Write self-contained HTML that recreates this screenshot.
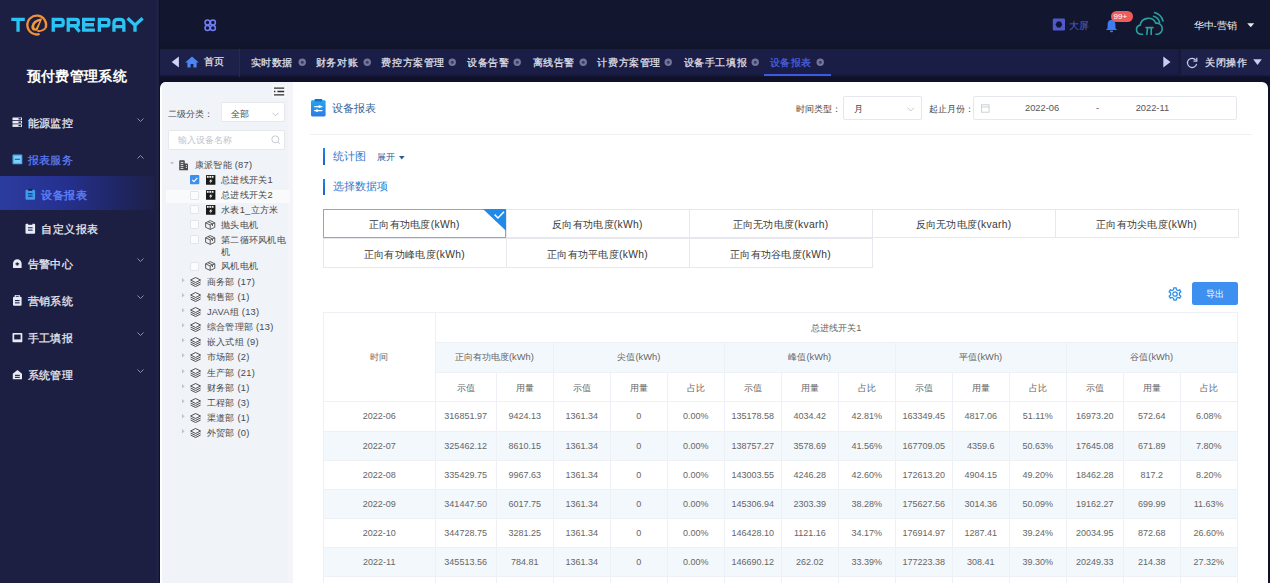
<!DOCTYPE html>
<html><head><meta charset="utf-8">
<style>
*{box-sizing:border-box;margin:0;padding:0}
html,body{width:1270px;height:583px;overflow:hidden;background:#0f1129;font-family:"Liberation Sans",sans-serif}
.a{position:absolute}
.t{position:absolute;white-space:nowrap;line-height:1}
#side{left:0;top:0;width:158.5px;height:583px;background:#1d1f42}
#sidestrip{left:152.8px;top:0;width:5.7px;height:583px;background:linear-gradient(90deg,#1c1d4a 0%,#1c1d4a 55%,#22223f 56%,#22223f 100%)}
#hdr{left:160px;top:0;width:1110px;height:48.5px;background:linear-gradient(#13162f,#121630 80%,#10152a)}
#tabs{left:160px;top:48.5px;width:1110px;height:28.8px;background:linear-gradient(#1a1d45 0%,#1a1d45 88%,#121430 100%)}
#panel{left:160px;top:81.7px;width:1107.6px;height:520px;background:#fff;border-radius:6px 6px 0 0;overflow:hidden}
#inner{left:0;top:-0.7px;width:1107.6px;height:520px}
#tree{left:2px;top:0;width:126px;height:520px;background:#f0f3f8}
#tree2{left:128px;top:0;width:4.8px;height:520px;background:#f5f4f9}
.mi{color:#e6e8f2;font-size:11px;letter-spacing:0.45px;-webkit-text-stroke:0.25px currentColor}
.tb{color:#e4e6f0;font-size:11px;-webkit-text-stroke:0.2px currentColor}
.cl{width:7px;height:7px;border-radius:50%;background:#6b6f8c}
.tr{color:#555;font-size:9.5px}
.cb{width:9px;height:9px;border:1px solid #dcdfe6;background:#fff;border-radius:1px}
.cell{border:1px solid #e4e7ed;font-size:10.5px;color:#333;display:flex;align-items:center;justify-content:center}
table{border-collapse:collapse;table-layout:fixed}
td{border:1px solid #ebeef5;text-align:center;font-size:9.2px;color:#555;padding:0;white-space:nowrap}
</style></head><body>
<div id="side" class="a"></div>
<div id="sidestrip" class="a"></div>
<!--SIDE-->
<svg class="a" style="left:0;top:0" width="155" height="45" viewBox="0 0 155 45">
 <g fill="none" stroke="#2ac3f3" stroke-width="3.3" stroke-linejoin="miter">
  <path d="M11.3 19.45H24.8M18.05 17.7V31.8"/>
  <path d="M53.25 31.8V19.45H61.2Q63.15 19.45 63.15 21.4V23.8Q63.15 25.75 61.2 25.75H53.25"/>
  <path d="M68.25 31.8V19.45H76.2Q78.3 19.45 78.3 21.4V23.8Q78.3 25.75 76.2 25.75H68.25M74.5 25.75L79.6 31.8"/>
  <path d="M94.9 19.45H83.65V30.05H94.9M83.65 24.75H94"/>
  <path d="M99.35 31.8V19.45H107Q108.85 19.45 108.85 21.4V23.8Q108.85 25.75 107 25.75H99.35"/>
  <path d="M113.95 31.8V23.2Q113.95 19.45 117.7 19.45H120.1Q123.85 19.45 123.85 23.2V31.8M113.95 26.6H123.85"/>
  <path d="M127.6 18.2L135 25.2L142.6 18.2M135 25.2V31.8"/>
 </g>
 <g fill="none" stroke="#f0923a" stroke-width="2.3"><path d="M45.6 28.2A9.4 9.4 0 1 0 39.6 34"/></g><path d="M42.3 18.2L37.4 30.6Q31.2 31.6 31.3 26.6Q31.8 19.6 42.3 18.2ZM39.6 21.2Q34.6 22.4 34.2 26.4Q34.2 28.6 35.8 28.4Z" fill="#f39a38" fill-rule="evenodd"/><path d="M37.4 30.6Q41 32.2 45.6 28.2" fill="none" stroke="#f0923a" stroke-width="1.8"/>
</svg>
<div class="t" style="left:26.8px;top:69px;font-size:14.1px;font-weight:bold;color:#fff;letter-spacing:0.3px">预付费管理系统</div>
<div class="a" style="left:0;top:176.0px;width:155px;height:34px;background:linear-gradient(90deg,#2c3b9e 0%,#253190 40%,#1f2560 80%,#1d2047 100%)"></div>
<svg class="a" style="left:11.5px;top:117.3px" width="11" height="11" viewBox="0 0 11 11"><rect x="0.5" y="0.5" width="9.5" height="2.6" fill="#e9ebf3"/><rect x="0.5" y="3.9" width="9.5" height="2.6" fill="#e9ebf3"/><rect x="0.5" y="7.3" width="9.5" height="2.6" fill="#e9ebf3"/><rect x="6.5" y="1.1" width="2.5" height="1.4" fill="#1d1f42"/><rect x="6.5" y="4.5" width="2.5" height="1.4" fill="#1d1f42"/><rect x="6.5" y="7.9" width="2.5" height="1.4" fill="#1d1f42"/></svg><div class="t mi" style="left:27.5px;top:118.25px;color:#e9ebf3;font-weight:normal">能源监控</div>
<svg class="a" style="left:136.5px;top:116.5px" width="7" height="6"><path d="M0.5 1.5L3.5 4.5L6.5 1.5" fill="none" stroke="#8a8fb0" stroke-width="1"/></svg>
<svg class="a" style="left:11.5px;top:154.3px" width="11" height="11" viewBox="0 0 11 11"><rect x="0.5" y="0.5" width="9.8" height="9.8" rx="1" fill="#49b0f5"/><rect x="2" y="2" width="6.8" height="6.8" fill="#7fd0fa"/><rect x="2.8" y="4.7" width="5.2" height="1.2" fill="#2a5fb0"/></svg><div class="t mi" style="left:27.5px;top:155.25px;color:#5a7df5;font-weight:normal">报表服务</div>
<svg class="a" style="left:136.5px;top:153.5px" width="7" height="6"><path d="M0.5 4.5L3.5 1.5L6.5 4.5" fill="none" stroke="#8a8fb0" stroke-width="1"/></svg>
<svg class="a" style="left:24.8px;top:189.3px" width="11" height="11" viewBox="0 0 11 11"><rect x="0.5" y="0.8" width="9.6" height="10" rx="1" fill="#3d9cf0"/><rect x="3.2" y="0" width="4.2" height="1.8" fill="#1d1f42"/><rect x="3" y="4.2" width="4.6" height="1.1" fill="#1d2b70"/><rect x="3" y="6.6" width="4.6" height="1.1" fill="#1d2b70"/></svg><div class="t mi" style="left:41.3px;top:190.25px;color:#5a7df5;font-weight:normal;-webkit-text-stroke:0.45px currentColor">设备报表</div>
<svg class="a" style="left:24.8px;top:223.3px" width="11" height="11" viewBox="0 0 11 11"><rect x="0.5" y="0.8" width="9.6" height="10" rx="1" fill="#e9ebf3"/><rect x="3.2" y="0" width="4.2" height="1.8" fill="#1d1f42"/><rect x="3" y="4.2" width="4.6" height="1.1" fill="#1d2b70"/><rect x="3" y="6.6" width="4.6" height="1.1" fill="#1d2b70"/></svg><div class="t mi" style="left:41.3px;top:224.25px;color:#e9ebf3;font-weight:normal">自定义报表</div>
<svg class="a" style="left:11.5px;top:257.6px" width="11" height="11" viewBox="0 0 11 11"><path d="M1 10V5.5A4.3 4.3 0 0 1 9.6 5.5V10Z" fill="#e9ebf3"/><rect x="4.5" y="4.5" width="1.6" height="3" fill="#1d1f42"/><rect x="3.5" y="5.2" width="3.6" height="1.3" fill="#1d1f42"/></svg><div class="t mi" style="left:27.5px;top:258.55px;color:#e9ebf3;font-weight:normal">告警中心</div>
<svg class="a" style="left:136.5px;top:256.8px" width="7" height="6"><path d="M0.5 1.5L3.5 4.5L6.5 1.5" fill="none" stroke="#8a8fb0" stroke-width="1"/></svg>
<svg class="a" style="left:11.5px;top:294.7px" width="11" height="11" viewBox="0 0 11 11"><rect x="1" y="1.8" width="8.6" height="9" rx="1" fill="#e9ebf3"/><rect x="3.3" y="0.3" width="4" height="2.2" fill="none" stroke="#e9ebf3" stroke-width="1"/><rect x="3" y="5" width="4.6" height="1.1" fill="#1d1f42"/><rect x="3" y="7.3" width="4.6" height="1.1" fill="#1d1f42"/></svg><div class="t mi" style="left:27.5px;top:295.65px;color:#e9ebf3;font-weight:normal">营销系统</div>
<svg class="a" style="left:136.5px;top:293.9px" width="7" height="6"><path d="M0.5 1.5L3.5 4.5L6.5 1.5" fill="none" stroke="#8a8fb0" stroke-width="1"/></svg>
<svg class="a" style="left:11.5px;top:331.7px" width="11" height="11" viewBox="0 0 11 11"><rect x="0.5" y="1" width="9.8" height="9.2" rx="0.8" fill="#e9ebf3"/><rect x="2.2" y="2.6" width="6.4" height="4.8" fill="#1d1f42"/></svg><div class="t mi" style="left:27.5px;top:332.65px;color:#e9ebf3;font-weight:normal">手工填报</div>
<svg class="a" style="left:136.5px;top:330.9px" width="7" height="6"><path d="M0.5 1.5L3.5 4.5L6.5 1.5" fill="none" stroke="#8a8fb0" stroke-width="1"/></svg>
<svg class="a" style="left:11.5px;top:368.8px" width="11" height="11" viewBox="0 0 11 11"><path d="M0.8 10.3V4.8L5.4 1L10 4.8V10.3Z" fill="#e9ebf3"/><rect x="3" y="5.8" width="4.8" height="1.1" fill="#1d1f42"/><rect x="3" y="7.8" width="4.8" height="1.1" fill="#1d1f42"/></svg><div class="t mi" style="left:27.5px;top:369.75px;color:#e9ebf3;font-weight:normal">系统管理</div>
<svg class="a" style="left:136.5px;top:368.0px" width="7" height="6"><path d="M0.5 1.5L3.5 4.5L6.5 1.5" fill="none" stroke="#8a8fb0" stroke-width="1"/></svg>
<!--/SIDE-->
<div id="hdr" class="a"></div>
<div id="tabs" class="a"></div>
<!--HDR-->
<svg class="a" style="left:203.8px;top:18.6px" width="13" height="13" viewBox="0 0 13 13"><g fill="none" stroke="#6f80f5" stroke-width="1.5"><circle cx="3.5" cy="3.5" r="2.5"/><circle cx="8.9" cy="3.5" r="2.5"/><circle cx="3.5" cy="8.9" r="2.5"/><circle cx="8.9" cy="8.9" r="2.5"/></g></svg>
<svg class="a" style="left:1052px;top:17.5px" width="14" height="13" viewBox="0 0 14 13"><rect x="0.8" y="0.5" width="12.2" height="12" rx="1.2" fill="#5059cc"/><path d="M3.5 6.5L5.2 3.6H8.6L10.3 6.5L8.6 9.4H5.2Z" fill="#12142f"/></svg>
<div class="t" style="left:1068.5px;top:21px;font-size:9.5px;color:#4e60d0">大屏</div>
<svg class="a" style="left:1104.5px;top:19px" width="13" height="14" viewBox="0 0 13 14"><path d="M6.5 0.8C3.8 0.8 2.6 3 2.6 5.5V9.2L0.8 11H12.2L10.4 9.2V5.5C10.4 3 9.2 0.8 6.5 0.8Z" fill="#3e7cf2"/><rect x="5" y="11.6" width="3" height="1.6" rx="0.8" fill="#3e7cf2"/></svg>
<div class="a" style="left:1110.5px;top:10.6px;width:22.5px;height:11.8px;border-radius:6px;background:#ee5d5a"></div>
<div class="t" style="left:1113.5px;top:12.5px;font-size:8px;color:#fff">99+</div>
<svg class="a" style="left:1134.5px;top:11px" width="30" height="26" viewBox="0 0 30 26"><g fill="none" stroke="#2aa09e" stroke-width="1.6" stroke-linecap="round"><path d="M7.5 23.2H5.8A4.6 4.6 0 0 1 5.2 14.1A8.2 8.2 0 0 1 20.8 12.2A5.5 5.5 0 0 1 22.6 23.2H21"/><path d="M18.6 5.2A8.6 8.6 0 0 1 24.6 11.2"/><path d="M19.6 1.6A12.2 12.2 0 0 1 28 10"/><path d="M11 16.6H18M12.6 16.6L11.8 23.4M16.2 16.6V23.4"/></g></svg>
<div class="t" style="left:1193.5px;top:21px;font-size:9.6px;color:#f0f1f6;font-weight:normal">华中-营销</div>
<svg class="a" style="left:1247px;top:23px" width="8" height="5"><path d="M0.2 0.3H7.2L3.7 4.3Z" fill="#e8e9f0"/></svg>
<div class="a" style="left:160px;top:48.5px;width:79px;height:26px;background:#1d2049"></div>
<div class="a" style="left:239px;top:48.5px;width:1px;height:28.8px;background:#24285a"></div>
<div class="a" style="left:1178px;top:48.5px;width:92px;height:26px;background:#1d2049"></div>
<div class="a" style="left:1178px;top:48.5px;width:2.5px;height:26px;background:#171a3c"></div>
<svg class="a" style="left:171px;top:55.5px" width="9" height="12"><path d="M7.9 0.5V11.4L0.7 5.95Z" fill="#d0d4f5"/></svg>
<svg class="a" style="left:185px;top:55.5px" width="14" height="12" viewBox="0 0 14 12"><path d="M7 0.4L13.8 6.6H11.6V11.4H8.4V8H5.6V11.4H2.4V6.6H0.2Z" fill="#4d86f2"/></svg>
<div class="t tb" style="left:203.5px;top:57.1px;font-size:10.4px;letter-spacing:0.6px">首页</div>
<svg class="a" style="left:1163px;top:55.5px" width="8" height="12"><path d="M0.3 0.5V11.4L7.5 5.95Z" fill="#c8cdf2"/></svg>
<svg class="a" style="left:1186px;top:56.5px" width="12" height="12" viewBox="0 0 12 12"><path d="M9.8 3.2A4.6 4.6 0 1 0 10.6 6.8" fill="none" stroke="#c8cdf2" stroke-width="1.2"/><path d="M10.8 0.8V4.2H7.4" fill="none" stroke="#c8cdf2" stroke-width="1.2"/></svg>
<div class="t tb" style="left:1205px;top:57.5px;font-size:10.4px;letter-spacing:0.55px">关闭操作</div>
<svg class="a" style="left:1252.5px;top:59px" width="9" height="7"><path d="M0.2 0.3H8.8L4.5 6Z" fill="#c8cdf2"/></svg>
<div class="a" style="left:764px;top:73.6px;width:67px;height:2.2px;background:#3a5ae0"></div>
<div class="t tb" style="left:250.7px;top:57.5px;font-size:10.4px;letter-spacing:0.6px;color:#e4e6f0">实时数据</div>
<svg class="a" style="left:297.5px;top:57.5px" width="9" height="9" viewBox="0 0 9 9"><circle cx="4.25" cy="4.25" r="3.7" fill="#72769a"/><circle cx="4.25" cy="4.25" r="1.5" fill="#3a3d62"/></svg>
<div class="t tb" style="left:315.9px;top:57.5px;font-size:10.4px;letter-spacing:0.6px;color:#e4e6f0">财务对账</div>
<svg class="a" style="left:362.5px;top:57.5px" width="9" height="9" viewBox="0 0 9 9"><circle cx="4.25" cy="4.25" r="3.7" fill="#72769a"/><circle cx="4.25" cy="4.25" r="1.5" fill="#3a3d62"/></svg>
<div class="t tb" style="left:381.4px;top:57.5px;font-size:10.4px;letter-spacing:0.6px;color:#e4e6f0">费控方案管理</div>
<svg class="a" style="left:448px;top:57.5px" width="9" height="9" viewBox="0 0 9 9"><circle cx="4.25" cy="4.25" r="3.7" fill="#72769a"/><circle cx="4.25" cy="4.25" r="1.5" fill="#3a3d62"/></svg>
<div class="t tb" style="left:467.3px;top:57.5px;font-size:10.4px;letter-spacing:0.6px;color:#e4e6f0">设备告警</div>
<svg class="a" style="left:513px;top:57.5px" width="9" height="9" viewBox="0 0 9 9"><circle cx="4.25" cy="4.25" r="3.7" fill="#72769a"/><circle cx="4.25" cy="4.25" r="1.5" fill="#3a3d62"/></svg>
<div class="t tb" style="left:532.5px;top:57.5px;font-size:10.4px;letter-spacing:0.6px;color:#e4e6f0">离线告警</div>
<svg class="a" style="left:579px;top:57.5px" width="9" height="9" viewBox="0 0 9 9"><circle cx="4.25" cy="4.25" r="3.7" fill="#72769a"/><circle cx="4.25" cy="4.25" r="1.5" fill="#3a3d62"/></svg>
<div class="t tb" style="left:597.4px;top:57.5px;font-size:10.4px;letter-spacing:0.6px;color:#e4e6f0">计费方案管理</div>
<svg class="a" style="left:663.5px;top:57.5px" width="9" height="9" viewBox="0 0 9 9"><circle cx="4.25" cy="4.25" r="3.7" fill="#72769a"/><circle cx="4.25" cy="4.25" r="1.5" fill="#3a3d62"/></svg>
<div class="t tb" style="left:683.7px;top:57.5px;font-size:10.4px;letter-spacing:0.6px;color:#e4e6f0">设备手工填报</div>
<svg class="a" style="left:751px;top:57.5px" width="9" height="9" viewBox="0 0 9 9"><circle cx="4.25" cy="4.25" r="3.7" fill="#72769a"/><circle cx="4.25" cy="4.25" r="1.5" fill="#3a3d62"/></svg>
<div class="t tb" style="left:769.5px;top:57.5px;font-size:10.4px;letter-spacing:0.6px;color:#4a63e6">设备报表</div>
<svg class="a" style="left:815.6px;top:57.5px" width="9" height="9" viewBox="0 0 9 9"><circle cx="4.25" cy="4.25" r="3.7" fill="#72769a"/><circle cx="4.25" cy="4.25" r="1.5" fill="#3a3d62"/></svg>
<!--/HDR-->
<div id="panel" class="a">
  <div id="inner" class="a">
<div id="tree" class="a"></div><div id="tree2" class="a"></div>
<!--TREE--><div class="a" style="left:111.5px;top:3.5px;width:15px;height:13px;background:#f6f7fa"></div><svg class="a" style="left:113.5px;top:5.8px" width="11" height="9" viewBox="0 0 11 9"><path d="M0 1.2H10.2M0 4.5H1.4M3.4 4.5H10.2M0 7.8H10.2" stroke="#2e2e2e" stroke-width="1.3"/></svg>
<div class="t tr" style="left:7.7px;top:28.3px;font-size:9.4px;color:#484848">二级分类：</div>
<div class="a" style="left:61px;top:21.4px;width:64px;height:20px;background:#fff;border:1px solid #e6e8ee;border-radius:2px"></div>
<div class="t tr" style="left:70.7px;top:28.3px;font-size:9.4px;color:#484848">全部</div>
<svg class="a" style="left:112.3px;top:30.8px" width="7" height="5"><path d="M0.5 0.8L3.5 3.8L6.5 0.8" fill="none" stroke="#b8bcc6" stroke-width="0.9"/></svg>
<div class="a" style="left:7.7px;top:48.7px;width:117.3px;height:20.7px;background:#fff;border:1px solid #e6e8ee;border-radius:2px"></div>
<div class="t tr" style="left:17.5px;top:54.5px;font-size:9.2px;color:#c0c4cc">输入设备名称</div>
<svg class="a" style="left:110.5px;top:54px" width="10" height="10" viewBox="0 0 10 10"><circle cx="4.3" cy="4.3" r="3.5" fill="none" stroke="#c0c4cc" stroke-width="0.9"/><path d="M6.8 6.8L8.8 8.8" stroke="#c0c4cc" stroke-width="0.9"/></svg>
<svg class="a" style="left:9.5px;top:81.1px" width="5" height="3"><path d="M0 0H4.2L2.1 2.4Z" fill="#c0c4cc"/></svg>
<svg class="a" style="left:18.9px;top:78.8px" width="10" height="11" viewBox="0 0 10 11"><path d="M0.2 10.2V1.2Q0.2 0.2 1.2 0.2H4.8Q5.8 0.2 5.8 1.2V10.2ZM5.8 3.6H8.2Q9 3.6 9 4.4V10.2H5.8Z" fill="#4a4a4a"/><path d="M1.6 2.4H4.4M1.6 4.4H4.4M1.6 6.4H4.4M1.6 8.4H4.4M6.8 5.6H8M6.8 7.4H8" stroke="#f0f3f8" stroke-width="0.9"/></svg>
<div class="t tr" style="left:34.9px;top:79.7px;font-size:9.3px;letter-spacing:0.25px;color:#484848">康派智能 (87)</div>
<div class="a" style="left:6px;top:108.7px;width:124px;height:13.5px;background:#f9fafb"></div>
<svg class="a" style="left:30.2px;top:94.1px" width="9.5" height="9.5" viewBox="0 0 9.5 9.5"><rect width="9.3" height="9.3" rx="1" fill="#3d8fec"/><path d="M2.2 4.8L4 6.6L7.3 2.8" fill="none" stroke="#fff" stroke-width="1.1"/></svg>
<svg class="a" style="left:45.7px;top:93.9px" width="10" height="10" viewBox="0 0 10 10"><rect x="0" y="0" width="9.4" height="9.8" rx="0.6" fill="#1a1a1a"/><rect x="0.9" y="0.9" width="1.8" height="1.9" fill="#eee"/><rect x="3.3" y="0.9" width="1.8" height="1.9" fill="#eee"/><rect x="5.7" y="0.9" width="1.8" height="1.9" fill="#eee"/><path d="M5.6 3.6L3 6.6H4.7L3.9 8.8L6.6 5.6H4.9Z" fill="#fff"/></svg>
<div class="t tr" style="left:61.2px;top:95.05px;font-size:9.3px;letter-spacing:0.25px;color:#484848">总进线开关1</div>
<div class="a" style="left:30.4px;top:109.5px;width:9px;height:9px;border:1px solid #e2e5ea;background:#fbfcfd;border-radius:1px"></div>
<svg class="a" style="left:45.7px;top:109.2px" width="10" height="10" viewBox="0 0 10 10"><rect x="0" y="0" width="9.4" height="9.8" rx="0.6" fill="#1a1a1a"/><rect x="0.9" y="0.9" width="1.8" height="1.9" fill="#eee"/><rect x="3.3" y="0.9" width="1.8" height="1.9" fill="#eee"/><rect x="5.7" y="0.9" width="1.8" height="1.9" fill="#eee"/><path d="M5.6 3.6L3 6.6H4.7L3.9 8.8L6.6 5.6H4.9Z" fill="#fff"/></svg>
<div class="t tr" style="left:61.2px;top:110.35px;font-size:9.3px;letter-spacing:0.25px;color:#484848">总进线开关2</div>
<div class="a" style="left:30.4px;top:124.4px;width:9px;height:9px;border:1px solid #e2e5ea;background:#fbfcfd;border-radius:1px"></div>
<svg class="a" style="left:45.7px;top:124.1px" width="10" height="10" viewBox="0 0 10 10"><rect x="0" y="0" width="9.4" height="9.8" rx="0.6" fill="#1a1a1a"/><rect x="0.9" y="0.9" width="1.8" height="1.9" fill="#eee"/><rect x="3.3" y="0.9" width="1.8" height="1.9" fill="#eee"/><rect x="5.7" y="0.9" width="1.8" height="1.9" fill="#eee"/><path d="M5.6 3.6L3 6.6H4.7L3.9 8.8L6.6 5.6H4.9Z" fill="#fff"/></svg>
<div class="t tr" style="left:61.2px;top:125.25px;font-size:9.3px;letter-spacing:0.25px;color:#484848">水表1_立方米</div>
<div class="a" style="left:30.4px;top:139.1px;width:9px;height:9px;border:1px solid #e2e5ea;background:#fbfcfd;border-radius:1px"></div>
<svg class="a" style="left:45px;top:138.9px" width="11" height="10" viewBox="0 0 11 10"><path d="M5.2 0.6L9.8 2.8V7.3L5.2 9.4L0.6 7.3V2.8Z M0.6 2.8L5.2 5L9.8 2.8 M5.2 5V9.4 M3 1.7L7.5 3.9V6" fill="none" stroke="#555" stroke-width="0.95"/></svg>
<div class="t tr" style="left:61.2px;top:139.95px;font-size:9.3px;letter-spacing:0.25px;color:#484848">抛头电机</div>
<div class="a" style="left:30.4px;top:154.4px;width:9px;height:9px;border:1px solid #e2e5ea;background:#fbfcfd;border-radius:1px"></div>
<svg class="a" style="left:45px;top:154.2px" width="11" height="10" viewBox="0 0 11 10"><path d="M5.2 0.6L9.8 2.8V7.3L5.2 9.4L0.6 7.3V2.8Z M0.6 2.8L5.2 5L9.8 2.8 M5.2 5V9.4 M3 1.7L7.5 3.9V6" fill="none" stroke="#555" stroke-width="0.95"/></svg>
<div class="t tr" style="left:61.2px;top:155.25px;font-size:9.3px;letter-spacing:0.25px;color:#484848">第二循环风机电</div>
<div class="a" style="left:30.4px;top:180.6px;width:9px;height:9px;border:1px solid #e2e5ea;background:#fbfcfd;border-radius:1px"></div>
<svg class="a" style="left:45px;top:180.4px" width="11" height="10" viewBox="0 0 11 10"><path d="M5.2 0.6L9.8 2.8V7.3L5.2 9.4L0.6 7.3V2.8Z M0.6 2.8L5.2 5L9.8 2.8 M5.2 5V9.4 M3 1.7L7.5 3.9V6" fill="none" stroke="#555" stroke-width="0.95"/></svg>
<div class="t tr" style="left:61.2px;top:181.45px;font-size:9.3px;letter-spacing:0.25px;color:#484848">风机电机</div>
<div class="t tr" style="left:61.2px;top:166.75px;font-size:9.3px;letter-spacing:0.25px;color:#484848">机</div>
<svg class="a" style="left:21.8px;top:196.7px" width="4" height="5"><path d="M0 0V4.4L2.6 2.2Z" fill="#c0c4cc"/></svg>
<svg class="a" style="left:30px;top:195.7px" width="12" height="10" viewBox="0 0 12 10"><g fill="none" stroke="#4a4a4a" stroke-width="0.95" stroke-linejoin="round"><path d="M5.6 0.5L10.6 3L5.6 5.5L0.6 3Z"/><path d="M0.6 5L5.6 7.5L10.6 5"/><path d="M0.6 7L5.6 9.5L10.6 7"/></g></svg>
<div class="t tr" style="left:46.9px;top:196.75px;font-size:9.3px;letter-spacing:0.25px;color:#484848">商务部 (17)</div>
<svg class="a" style="left:21.8px;top:211.9px" width="4" height="5"><path d="M0 0V4.4L2.6 2.2Z" fill="#c0c4cc"/></svg>
<svg class="a" style="left:30px;top:210.9px" width="12" height="10" viewBox="0 0 12 10"><g fill="none" stroke="#4a4a4a" stroke-width="0.95" stroke-linejoin="round"><path d="M5.6 0.5L10.6 3L5.6 5.5L0.6 3Z"/><path d="M0.6 5L5.6 7.5L10.6 5"/><path d="M0.6 7L5.6 9.5L10.6 7"/></g></svg>
<div class="t tr" style="left:46.9px;top:211.95px;font-size:9.3px;letter-spacing:0.25px;color:#484848">销售部 (1)</div>
<svg class="a" style="left:21.8px;top:227.1px" width="4" height="5"><path d="M0 0V4.4L2.6 2.2Z" fill="#c0c4cc"/></svg>
<svg class="a" style="left:30px;top:226.1px" width="12" height="10" viewBox="0 0 12 10"><g fill="none" stroke="#4a4a4a" stroke-width="0.95" stroke-linejoin="round"><path d="M5.6 0.5L10.6 3L5.6 5.5L0.6 3Z"/><path d="M0.6 5L5.6 7.5L10.6 5"/><path d="M0.6 7L5.6 9.5L10.6 7"/></g></svg>
<div class="t tr" style="left:46.9px;top:227.15px;font-size:9.3px;letter-spacing:0.25px;color:#484848">JAVA组 (13)</div>
<svg class="a" style="left:21.8px;top:242.2px" width="4" height="5"><path d="M0 0V4.4L2.6 2.2Z" fill="#c0c4cc"/></svg>
<svg class="a" style="left:30px;top:241.2px" width="12" height="10" viewBox="0 0 12 10"><g fill="none" stroke="#4a4a4a" stroke-width="0.95" stroke-linejoin="round"><path d="M5.6 0.5L10.6 3L5.6 5.5L0.6 3Z"/><path d="M0.6 5L5.6 7.5L10.6 5"/><path d="M0.6 7L5.6 9.5L10.6 7"/></g></svg>
<div class="t tr" style="left:46.9px;top:242.25px;font-size:9.3px;letter-spacing:0.25px;color:#484848">综合管理部 (13)</div>
<svg class="a" style="left:21.8px;top:257.3px" width="4" height="5"><path d="M0 0V4.4L2.6 2.2Z" fill="#c0c4cc"/></svg>
<svg class="a" style="left:30px;top:256.3px" width="12" height="10" viewBox="0 0 12 10"><g fill="none" stroke="#4a4a4a" stroke-width="0.95" stroke-linejoin="round"><path d="M5.6 0.5L10.6 3L5.6 5.5L0.6 3Z"/><path d="M0.6 5L5.6 7.5L10.6 5"/><path d="M0.6 7L5.6 9.5L10.6 7"/></g></svg>
<div class="t tr" style="left:46.9px;top:257.35px;font-size:9.3px;letter-spacing:0.25px;color:#484848">嵌入式组 (9)</div>
<svg class="a" style="left:21.8px;top:272.4px" width="4" height="5"><path d="M0 0V4.4L2.6 2.2Z" fill="#c0c4cc"/></svg>
<svg class="a" style="left:30px;top:271.4px" width="12" height="10" viewBox="0 0 12 10"><g fill="none" stroke="#4a4a4a" stroke-width="0.95" stroke-linejoin="round"><path d="M5.6 0.5L10.6 3L5.6 5.5L0.6 3Z"/><path d="M0.6 5L5.6 7.5L10.6 5"/><path d="M0.6 7L5.6 9.5L10.6 7"/></g></svg>
<div class="t tr" style="left:46.9px;top:272.45px;font-size:9.3px;letter-spacing:0.25px;color:#484848">市场部 (2)</div>
<svg class="a" style="left:21.8px;top:287.5px" width="4" height="5"><path d="M0 0V4.4L2.6 2.2Z" fill="#c0c4cc"/></svg>
<svg class="a" style="left:30px;top:286.5px" width="12" height="10" viewBox="0 0 12 10"><g fill="none" stroke="#4a4a4a" stroke-width="0.95" stroke-linejoin="round"><path d="M5.6 0.5L10.6 3L5.6 5.5L0.6 3Z"/><path d="M0.6 5L5.6 7.5L10.6 5"/><path d="M0.6 7L5.6 9.5L10.6 7"/></g></svg>
<div class="t tr" style="left:46.9px;top:287.55px;font-size:9.3px;letter-spacing:0.25px;color:#484848">生产部 (21)</div>
<svg class="a" style="left:21.8px;top:302.5px" width="4" height="5"><path d="M0 0V4.4L2.6 2.2Z" fill="#c0c4cc"/></svg>
<svg class="a" style="left:30px;top:301.5px" width="12" height="10" viewBox="0 0 12 10"><g fill="none" stroke="#4a4a4a" stroke-width="0.95" stroke-linejoin="round"><path d="M5.6 0.5L10.6 3L5.6 5.5L0.6 3Z"/><path d="M0.6 5L5.6 7.5L10.6 5"/><path d="M0.6 7L5.6 9.5L10.6 7"/></g></svg>
<div class="t tr" style="left:46.9px;top:302.55px;font-size:9.3px;letter-spacing:0.25px;color:#484848">财务部 (1)</div>
<svg class="a" style="left:21.8px;top:317.6px" width="4" height="5"><path d="M0 0V4.4L2.6 2.2Z" fill="#c0c4cc"/></svg>
<svg class="a" style="left:30px;top:316.6px" width="12" height="10" viewBox="0 0 12 10"><g fill="none" stroke="#4a4a4a" stroke-width="0.95" stroke-linejoin="round"><path d="M5.6 0.5L10.6 3L5.6 5.5L0.6 3Z"/><path d="M0.6 5L5.6 7.5L10.6 5"/><path d="M0.6 7L5.6 9.5L10.6 7"/></g></svg>
<div class="t tr" style="left:46.9px;top:317.65px;font-size:9.3px;letter-spacing:0.25px;color:#484848">工程部 (3)</div>
<svg class="a" style="left:21.8px;top:332.6px" width="4" height="5"><path d="M0 0V4.4L2.6 2.2Z" fill="#c0c4cc"/></svg>
<svg class="a" style="left:30px;top:331.6px" width="12" height="10" viewBox="0 0 12 10"><g fill="none" stroke="#4a4a4a" stroke-width="0.95" stroke-linejoin="round"><path d="M5.6 0.5L10.6 3L5.6 5.5L0.6 3Z"/><path d="M0.6 5L5.6 7.5L10.6 5"/><path d="M0.6 7L5.6 9.5L10.6 7"/></g></svg>
<div class="t tr" style="left:46.9px;top:332.65px;font-size:9.3px;letter-spacing:0.25px;color:#484848">渠道部 (1)</div>
<svg class="a" style="left:21.8px;top:347.8px" width="4" height="5"><path d="M0 0V4.4L2.6 2.2Z" fill="#c0c4cc"/></svg>
<svg class="a" style="left:30px;top:346.8px" width="12" height="10" viewBox="0 0 12 10"><g fill="none" stroke="#4a4a4a" stroke-width="0.95" stroke-linejoin="round"><path d="M5.6 0.5L10.6 3L5.6 5.5L0.6 3Z"/><path d="M0.6 5L5.6 7.5L10.6 5"/><path d="M0.6 7L5.6 9.5L10.6 7"/></g></svg>
<div class="t tr" style="left:46.9px;top:347.85px;font-size:9.3px;letter-spacing:0.25px;color:#484848">外贸部 (0)</div>
<!--/TREE-->
<!--MAIN1--><svg class="a" style="left:150.6px;top:17.6px" width="15" height="18" viewBox="0 0 15 18"><defs><linearGradient id="g1" x1="0" y1="0" x2="0" y2="1"><stop offset="0" stop-color="#22a6f2"/><stop offset="1" stop-color="#2c7be6"/></linearGradient></defs><rect x="0" y="1.2" width="14.6" height="16.2" rx="1.3" fill="url(#g1)"/><rect x="3.6" y="0" width="7.6" height="2.6" rx="0.6" fill="#1a6fc8"/><path d="M3.2 7.6H11.4M3.2 11.6H11.4" stroke="#fff" stroke-width="1.1"/><circle cx="8.6" cy="7.6" r="1.3" fill="#fff"/><circle cx="6" cy="11.6" r="1.3" fill="#fff"/></svg>
<div class="t" style="left:172.1px;top:21.65px;font-size:11.1px;color:#2f649c;">设备报表</div>
<div class="t" style="left:636px;top:23.1px;font-size:9.4px;color:#444;">时间类型：</div>
<div class="a" style="left:682.7px;top:15.3px;width:79px;height:23.8px;border:1px solid #e4e7ed;border-radius:2px;background:#fff"></div>
<div class="t" style="left:693.7px;top:22.9px;font-size:9.4px;color:#444;">月</div>
<svg class="a" style="left:747px;top:25.5px" width="8" height="5"><path d="M0.5 0.7L3.8 4L7.1 0.7" fill="none" stroke="#c0c4cc" stroke-width="0.9"/></svg>
<div class="t" style="left:769px;top:23.1px;font-size:9.4px;color:#444;">起止月份：</div>
<div class="a" style="left:812.7px;top:15.4px;width:264.6px;height:23.8px;border:1px solid #e4e7ed;border-radius:2px;background:#fff"></div>
<svg class="a" style="left:820.8px;top:23.3px" width="9" height="9" viewBox="0 0 9 9"><rect x="0.5" y="0.8" width="7.6" height="7.4" fill="none" stroke="#c8ccd4" stroke-width="0.9"/><path d="M0.5 3H8.1" stroke="#c8ccd4" stroke-width="0.9"/></svg>
<div class="t" style="left:865px;top:22.95px;font-size:9.3px;color:#555;">2022-06</div>
<div class="t" style="left:936px;top:22.55px;font-size:9.3px;color:#555;">-</div>
<div class="t" style="left:975.7px;top:22.95px;font-size:9.3px;color:#555;">2022-11</div>
<div class="a" style="left:149.5px;top:53px;width:942px;height:1px;background:#eef0f4"></div>
<div class="a" style="left:162.7px;top:67.1px;width:2.8px;height:17px;background:linear-gradient(#2386ea,#1c62c4)"></div>
<div class="t" style="left:172.6px;top:70.0px;font-size:11.2px;color:#3278cc;">统计图</div>
<div class="t" style="left:217px;top:71.8px;font-size:9px;color:#2a5a98;">展开</div>
<svg class="a" style="left:239.4px;top:74.8px" width="6" height="4"><path d="M0 0H5.6L2.8 3.6Z" fill="#2a5a98"/></svg>
<div class="a" style="left:162.7px;top:97.8px;width:2.8px;height:16px;background:linear-gradient(#2386ea,#1c62c4)"></div>
<div class="t" style="left:173.1px;top:100.4px;font-size:11.2px;color:#3278cc;">选择数据项</div>
<div class="a" style="left:162.9px;top:127.6px;width:183.0px;height:29.6px;border:1.3px solid #86a8cc;background:#fff"></div>
<svg class="a" style="left:322.7px;top:127.6px" width="24" height="23" viewBox="0 0 24 23"><path d="M0 0H23.2V22Z" fill="#1f8ae8"/><path d="M11.6 5.6L15 9L21 2.8" fill="none" stroke="#fff" stroke-width="1.5"/></svg>
<div class="t" style="left:162.9px;top:138.85px;width:183.0px;text-align:center;font-size:10.3px;letter-spacing:0.3px;color:#383838;">正向有功电度(kWh)</div>
<div class="a" style="left:345.9px;top:127.6px;width:184.1px;height:29.9px;border:1px solid #e6e8ed;background:#fff"></div>
<div class="t" style="left:345.9px;top:138.85px;width:183.1px;text-align:center;font-size:10.3px;letter-spacing:0.3px;color:#383838;">反向有功电度(kWh)</div>
<div class="a" style="left:529.0px;top:127.6px;width:184.0px;height:29.9px;border:1px solid #e6e8ed;background:#fff"></div>
<div class="t" style="left:529px;top:138.85px;width:183px;text-align:center;font-size:10.3px;letter-spacing:0.3px;color:#383838;">正向无功电度(kvarh)</div>
<div class="a" style="left:712.0px;top:127.6px;width:184.0px;height:29.9px;border:1px solid #e6e8ed;background:#fff"></div>
<div class="t" style="left:712px;top:138.85px;width:183px;text-align:center;font-size:10.3px;letter-spacing:0.3px;color:#383838;">反向无功电度(kvarh)</div>
<div class="a" style="left:895.0px;top:127.6px;width:184.0px;height:29.9px;border:1px solid #e6e8ed;background:#fff"></div>
<div class="t" style="left:895px;top:138.85px;width:183px;text-align:center;font-size:10.3px;letter-spacing:0.3px;color:#383838;">正向有功尖电度(kWh)</div>
<div class="a" style="left:162.9px;top:157.3px;width:184.0px;height:30.0px;border:1px solid #e6e8ed;background:#fff"></div>
<div class="t" style="left:162.9px;top:168.75px;width:183.0px;text-align:center;font-size:10.3px;letter-spacing:0.3px;color:#383838;">正向有功峰电度(kWh)</div>
<div class="a" style="left:345.9px;top:157.3px;width:184.1px;height:30.0px;border:1px solid #e6e8ed;background:#fff"></div>
<div class="t" style="left:345.9px;top:168.75px;width:183.1px;text-align:center;font-size:10.3px;letter-spacing:0.3px;color:#383838;">正向有功平电度(kWh)</div>
<div class="a" style="left:529.0px;top:157.3px;width:184.0px;height:30.0px;border:1px solid #e6e8ed;background:#fff"></div>
<div class="t" style="left:529px;top:168.75px;width:183px;text-align:center;font-size:10.3px;letter-spacing:0.3px;color:#383838;">正向有功谷电度(kWh)</div>
<svg class="a" style="left:1007.8px;top:205.6px" width="14" height="14" viewBox="0 0 14 14"><g fill="none" stroke="#2e8fe6" stroke-width="1.3"><path d="M5.9 0.9H8.1L8.5 2.7L9.9 3.5L11.7 2.9L12.8 4.8L11.4 6V8L12.8 9.2L11.7 11.1L9.9 10.5L8.5 11.3L8.1 13.1H5.9L5.5 11.3L4.1 10.5L2.3 11.1L1.2 9.2L2.6 8V6L1.2 4.8L2.3 2.9L4.1 3.5L5.5 2.7Z"/><circle cx="7" cy="7" r="2.2"/></g></svg>
<div class="a" style="left:1032px;top:200.5px;width:45.5px;height:23.4px;background:#3d8ff0;border-radius:2.5px"></div>
<div class="t" style="left:1032px;top:207.5px;width:45.5px;text-align:center;font-size:9.4px;color:#fff;">导出</div>
<!--/MAIN1-->
<!--TABLE--><div class="a" style="left:275.3px;top:260.6px;width:801.9000000000001px;height:30px;background:#f3f8fd"></div>
<div class="a" style="left:163.2px;top:349.52px;width:914.0px;height:29.12px;background:#f3f8fd"></div>
<div class="a" style="left:163.2px;top:407.76px;width:914.0px;height:29.12px;background:#f3f8fd"></div>
<div class="a" style="left:163.2px;top:466.0px;width:914.0px;height:29.12px;background:#f3f8fd"></div>
<div class="a" style="left:163.2px;top:231px;width:915.0px;height:1px;background:#edf0f5"></div>
<div class="a" style="left:275.3px;top:260.6px;width:802.9px;height:1px;background:#edf0f5"></div>
<div class="a" style="left:275.3px;top:290.6px;width:802.9px;height:1px;background:#edf0f5"></div>
<div class="a" style="left:163.2px;top:320.4px;width:915.0px;height:1px;background:#edf0f5"></div>
<div class="a" style="left:163.2px;top:349.52px;width:915.0px;height:1px;background:#edf0f5"></div>
<div class="a" style="left:163.2px;top:378.64px;width:915.0px;height:1px;background:#edf0f5"></div>
<div class="a" style="left:163.2px;top:407.76px;width:915.0px;height:1px;background:#edf0f5"></div>
<div class="a" style="left:163.2px;top:436.88px;width:915.0px;height:1px;background:#edf0f5"></div>
<div class="a" style="left:163.2px;top:466.0px;width:915.0px;height:1px;background:#edf0f5"></div>
<div class="a" style="left:163.2px;top:495.12px;width:915.0px;height:1px;background:#edf0f5"></div>
<div class="a" style="left:163.2px;top:524.24px;width:915.0px;height:1px;background:#edf0f5"></div>
<div class="a" style="left:163.2px;top:231px;width:1px;height:288px;background:#edf0f5"></div>
<div class="a" style="left:1077.2px;top:231px;width:1px;height:288px;background:#edf0f5"></div>
<div class="a" style="left:275.3px;top:231px;width:1px;height:288px;background:#edf0f5"></div>
<div class="a" style="left:393.4px;top:260.6px;width:1px;height:258.4px;background:#edf0f5"></div>
<div class="a" style="left:564.35px;top:260.6px;width:1px;height:258.4px;background:#edf0f5"></div>
<div class="a" style="left:735.3px;top:260.6px;width:1px;height:258.4px;background:#edf0f5"></div>
<div class="a" style="left:906.25px;top:260.6px;width:1px;height:258.4px;background:#edf0f5"></div>
<div class="a" style="left:450.38px;top:290.6px;width:1px;height:228.4px;background:#edf0f5"></div>
<div class="a" style="left:507.37px;top:290.6px;width:1px;height:228.4px;background:#edf0f5"></div>
<div class="a" style="left:564.35px;top:290.6px;width:1px;height:228.4px;background:#edf0f5"></div>
<div class="a" style="left:621.33px;top:290.6px;width:1px;height:228.4px;background:#edf0f5"></div>
<div class="a" style="left:678.32px;top:290.6px;width:1px;height:228.4px;background:#edf0f5"></div>
<div class="a" style="left:735.3px;top:290.6px;width:1px;height:228.4px;background:#edf0f5"></div>
<div class="a" style="left:792.28px;top:290.6px;width:1px;height:228.4px;background:#edf0f5"></div>
<div class="a" style="left:849.27px;top:290.6px;width:1px;height:228.4px;background:#edf0f5"></div>
<div class="a" style="left:906.25px;top:290.6px;width:1px;height:228.4px;background:#edf0f5"></div>
<div class="a" style="left:963.23px;top:290.6px;width:1px;height:228.4px;background:#edf0f5"></div>
<div class="a" style="left:1020.22px;top:290.6px;width:1px;height:228.4px;background:#edf0f5"></div>
<div class="a" style="left:336px;top:290.6px;width:1px;height:228.4px;background:#edf0f5"></div>
<div class="t" style="left:163.2px;top:272.35px;width:112.1px;text-align:center;font-size:9.3px;color:#666;">时间</div>
<div class="t" style="left:275.3px;top:243.25px;width:801.9px;text-align:center;font-size:9.3px;color:#666;">总进线开关1</div>
<div class="t" style="left:275.3px;top:272.35px;width:118.1px;text-align:center;font-size:9.3px;color:#666;">正向有功电度(kWh)</div>
<div class="t" style="left:393.4px;top:272.35px;width:170.95px;text-align:center;font-size:9.3px;color:#666;">尖值(kWh)</div>
<div class="t" style="left:564.35px;top:272.35px;width:170.95px;text-align:center;font-size:9.3px;color:#666;">峰值(kWh)</div>
<div class="t" style="left:735.3px;top:272.35px;width:170.95px;text-align:center;font-size:9.3px;color:#666;">平值(kWh)</div>
<div class="t" style="left:906.25px;top:272.35px;width:170.95px;text-align:center;font-size:9.3px;color:#666;">谷值(kWh)</div>
<div class="t" style="left:275.3px;top:302.55px;width:60.7px;text-align:center;font-size:9.3px;color:#666;">示值</div>
<div class="t" style="left:336px;top:302.55px;width:57.4px;text-align:center;font-size:9.3px;color:#666;">用量</div>
<div class="t" style="left:393.4px;top:302.55px;width:56.98px;text-align:center;font-size:9.3px;color:#666;">示值</div>
<div class="t" style="left:450.38px;top:302.55px;width:56.99px;text-align:center;font-size:9.3px;color:#666;">用量</div>
<div class="t" style="left:507.37px;top:302.55px;width:56.98px;text-align:center;font-size:9.3px;color:#666;">占比</div>
<div class="t" style="left:564.35px;top:302.55px;width:56.98px;text-align:center;font-size:9.3px;color:#666;">示值</div>
<div class="t" style="left:621.33px;top:302.55px;width:56.99px;text-align:center;font-size:9.3px;color:#666;">用量</div>
<div class="t" style="left:678.32px;top:302.55px;width:56.98px;text-align:center;font-size:9.3px;color:#666;">占比</div>
<div class="t" style="left:735.3px;top:302.55px;width:56.98px;text-align:center;font-size:9.3px;color:#666;">示值</div>
<div class="t" style="left:792.28px;top:302.55px;width:56.99px;text-align:center;font-size:9.3px;color:#666;">用量</div>
<div class="t" style="left:849.27px;top:302.55px;width:56.98px;text-align:center;font-size:9.3px;color:#666;">占比</div>
<div class="t" style="left:906.25px;top:302.55px;width:56.98px;text-align:center;font-size:9.3px;color:#666;">示值</div>
<div class="t" style="left:963.23px;top:302.55px;width:56.99px;text-align:center;font-size:9.3px;color:#666;">用量</div>
<div class="t" style="left:1020.22px;top:302.55px;width:56.98px;text-align:center;font-size:9.3px;color:#666;">占比</div>
<div class="t" style="left:163.2px;top:331.46px;width:112.1px;text-align:center;font-size:9px;color:#666;">2022-06</div>
<div class="t" style="left:275.3px;top:331.46px;width:60.7px;text-align:center;font-size:9px;color:#666;">316851.97</div>
<div class="t" style="left:336px;top:331.46px;width:57.4px;text-align:center;font-size:9px;color:#666;">9424.13</div>
<div class="t" style="left:393.4px;top:331.46px;width:56.98px;text-align:center;font-size:9px;color:#666;">1361.34</div>
<div class="t" style="left:450.38px;top:331.46px;width:56.99px;text-align:center;font-size:9px;color:#666;">0</div>
<div class="t" style="left:507.37px;top:331.46px;width:56.98px;text-align:center;font-size:9px;color:#666;">0.00%</div>
<div class="t" style="left:564.35px;top:331.46px;width:56.98px;text-align:center;font-size:9px;color:#666;">135178.58</div>
<div class="t" style="left:621.33px;top:331.46px;width:56.99px;text-align:center;font-size:9px;color:#666;">4034.42</div>
<div class="t" style="left:678.32px;top:331.46px;width:56.98px;text-align:center;font-size:9px;color:#666;">42.81%</div>
<div class="t" style="left:735.3px;top:331.46px;width:56.98px;text-align:center;font-size:9px;color:#666;">163349.45</div>
<div class="t" style="left:792.28px;top:331.46px;width:56.99px;text-align:center;font-size:9px;color:#666;">4817.06</div>
<div class="t" style="left:849.27px;top:331.46px;width:56.98px;text-align:center;font-size:9px;color:#666;">51.11%</div>
<div class="t" style="left:906.25px;top:331.46px;width:56.98px;text-align:center;font-size:9px;color:#666;">16973.20</div>
<div class="t" style="left:963.23px;top:331.46px;width:56.99px;text-align:center;font-size:9px;color:#666;">572.64</div>
<div class="t" style="left:1020.22px;top:331.46px;width:56.98px;text-align:center;font-size:9px;color:#666;">6.08%</div>
<div class="t" style="left:163.2px;top:360.58px;width:112.1px;text-align:center;font-size:9px;color:#666;">2022-07</div>
<div class="t" style="left:275.3px;top:360.58px;width:60.7px;text-align:center;font-size:9px;color:#666;">325462.12</div>
<div class="t" style="left:336px;top:360.58px;width:57.4px;text-align:center;font-size:9px;color:#666;">8610.15</div>
<div class="t" style="left:393.4px;top:360.58px;width:56.98px;text-align:center;font-size:9px;color:#666;">1361.34</div>
<div class="t" style="left:450.38px;top:360.58px;width:56.99px;text-align:center;font-size:9px;color:#666;">0</div>
<div class="t" style="left:507.37px;top:360.58px;width:56.98px;text-align:center;font-size:9px;color:#666;">0.00%</div>
<div class="t" style="left:564.35px;top:360.58px;width:56.98px;text-align:center;font-size:9px;color:#666;">138757.27</div>
<div class="t" style="left:621.33px;top:360.58px;width:56.99px;text-align:center;font-size:9px;color:#666;">3578.69</div>
<div class="t" style="left:678.32px;top:360.58px;width:56.98px;text-align:center;font-size:9px;color:#666;">41.56%</div>
<div class="t" style="left:735.3px;top:360.58px;width:56.98px;text-align:center;font-size:9px;color:#666;">167709.05</div>
<div class="t" style="left:792.28px;top:360.58px;width:56.99px;text-align:center;font-size:9px;color:#666;">4359.6</div>
<div class="t" style="left:849.27px;top:360.58px;width:56.98px;text-align:center;font-size:9px;color:#666;">50.63%</div>
<div class="t" style="left:906.25px;top:360.58px;width:56.98px;text-align:center;font-size:9px;color:#666;">17645.08</div>
<div class="t" style="left:963.23px;top:360.58px;width:56.99px;text-align:center;font-size:9px;color:#666;">671.89</div>
<div class="t" style="left:1020.22px;top:360.58px;width:56.98px;text-align:center;font-size:9px;color:#666;">7.80%</div>
<div class="t" style="left:163.2px;top:389.7px;width:112.1px;text-align:center;font-size:9px;color:#666;">2022-08</div>
<div class="t" style="left:275.3px;top:389.7px;width:60.7px;text-align:center;font-size:9px;color:#666;">335429.75</div>
<div class="t" style="left:336px;top:389.7px;width:57.4px;text-align:center;font-size:9px;color:#666;">9967.63</div>
<div class="t" style="left:393.4px;top:389.7px;width:56.98px;text-align:center;font-size:9px;color:#666;">1361.34</div>
<div class="t" style="left:450.38px;top:389.7px;width:56.99px;text-align:center;font-size:9px;color:#666;">0</div>
<div class="t" style="left:507.37px;top:389.7px;width:56.98px;text-align:center;font-size:9px;color:#666;">0.00%</div>
<div class="t" style="left:564.35px;top:389.7px;width:56.98px;text-align:center;font-size:9px;color:#666;">143003.55</div>
<div class="t" style="left:621.33px;top:389.7px;width:56.99px;text-align:center;font-size:9px;color:#666;">4246.28</div>
<div class="t" style="left:678.32px;top:389.7px;width:56.98px;text-align:center;font-size:9px;color:#666;">42.60%</div>
<div class="t" style="left:735.3px;top:389.7px;width:56.98px;text-align:center;font-size:9px;color:#666;">172613.20</div>
<div class="t" style="left:792.28px;top:389.7px;width:56.99px;text-align:center;font-size:9px;color:#666;">4904.15</div>
<div class="t" style="left:849.27px;top:389.7px;width:56.98px;text-align:center;font-size:9px;color:#666;">49.20%</div>
<div class="t" style="left:906.25px;top:389.7px;width:56.98px;text-align:center;font-size:9px;color:#666;">18462.28</div>
<div class="t" style="left:963.23px;top:389.7px;width:56.99px;text-align:center;font-size:9px;color:#666;">817.2</div>
<div class="t" style="left:1020.22px;top:389.7px;width:56.98px;text-align:center;font-size:9px;color:#666;">8.20%</div>
<div class="t" style="left:163.2px;top:418.82px;width:112.1px;text-align:center;font-size:9px;color:#666;">2022-09</div>
<div class="t" style="left:275.3px;top:418.82px;width:60.7px;text-align:center;font-size:9px;color:#666;">341447.50</div>
<div class="t" style="left:336px;top:418.82px;width:57.4px;text-align:center;font-size:9px;color:#666;">6017.75</div>
<div class="t" style="left:393.4px;top:418.82px;width:56.98px;text-align:center;font-size:9px;color:#666;">1361.34</div>
<div class="t" style="left:450.38px;top:418.82px;width:56.99px;text-align:center;font-size:9px;color:#666;">0</div>
<div class="t" style="left:507.37px;top:418.82px;width:56.98px;text-align:center;font-size:9px;color:#666;">0.00%</div>
<div class="t" style="left:564.35px;top:418.82px;width:56.98px;text-align:center;font-size:9px;color:#666;">145306.94</div>
<div class="t" style="left:621.33px;top:418.82px;width:56.99px;text-align:center;font-size:9px;color:#666;">2303.39</div>
<div class="t" style="left:678.32px;top:418.82px;width:56.98px;text-align:center;font-size:9px;color:#666;">38.28%</div>
<div class="t" style="left:735.3px;top:418.82px;width:56.98px;text-align:center;font-size:9px;color:#666;">175627.56</div>
<div class="t" style="left:792.28px;top:418.82px;width:56.99px;text-align:center;font-size:9px;color:#666;">3014.36</div>
<div class="t" style="left:849.27px;top:418.82px;width:56.98px;text-align:center;font-size:9px;color:#666;">50.09%</div>
<div class="t" style="left:906.25px;top:418.82px;width:56.98px;text-align:center;font-size:9px;color:#666;">19162.27</div>
<div class="t" style="left:963.23px;top:418.82px;width:56.99px;text-align:center;font-size:9px;color:#666;">699.99</div>
<div class="t" style="left:1020.22px;top:418.82px;width:56.98px;text-align:center;font-size:9px;color:#666;">11.63%</div>
<div class="t" style="left:163.2px;top:447.94px;width:112.1px;text-align:center;font-size:9px;color:#666;">2022-10</div>
<div class="t" style="left:275.3px;top:447.94px;width:60.7px;text-align:center;font-size:9px;color:#666;">344728.75</div>
<div class="t" style="left:336px;top:447.94px;width:57.4px;text-align:center;font-size:9px;color:#666;">3281.25</div>
<div class="t" style="left:393.4px;top:447.94px;width:56.98px;text-align:center;font-size:9px;color:#666;">1361.34</div>
<div class="t" style="left:450.38px;top:447.94px;width:56.99px;text-align:center;font-size:9px;color:#666;">0</div>
<div class="t" style="left:507.37px;top:447.94px;width:56.98px;text-align:center;font-size:9px;color:#666;">0.00%</div>
<div class="t" style="left:564.35px;top:447.94px;width:56.98px;text-align:center;font-size:9px;color:#666;">146428.10</div>
<div class="t" style="left:621.33px;top:447.94px;width:56.99px;text-align:center;font-size:9px;color:#666;">1121.16</div>
<div class="t" style="left:678.32px;top:447.94px;width:56.98px;text-align:center;font-size:9px;color:#666;">34.17%</div>
<div class="t" style="left:735.3px;top:447.94px;width:56.98px;text-align:center;font-size:9px;color:#666;">176914.97</div>
<div class="t" style="left:792.28px;top:447.94px;width:56.99px;text-align:center;font-size:9px;color:#666;">1287.41</div>
<div class="t" style="left:849.27px;top:447.94px;width:56.98px;text-align:center;font-size:9px;color:#666;">39.24%</div>
<div class="t" style="left:906.25px;top:447.94px;width:56.98px;text-align:center;font-size:9px;color:#666;">20034.95</div>
<div class="t" style="left:963.23px;top:447.94px;width:56.99px;text-align:center;font-size:9px;color:#666;">872.68</div>
<div class="t" style="left:1020.22px;top:447.94px;width:56.98px;text-align:center;font-size:9px;color:#666;">26.60%</div>
<div class="t" style="left:163.2px;top:477.06px;width:112.1px;text-align:center;font-size:9px;color:#666;">2022-11</div>
<div class="t" style="left:275.3px;top:477.06px;width:60.7px;text-align:center;font-size:9px;color:#666;">345513.56</div>
<div class="t" style="left:336px;top:477.06px;width:57.4px;text-align:center;font-size:9px;color:#666;">784.81</div>
<div class="t" style="left:393.4px;top:477.06px;width:56.98px;text-align:center;font-size:9px;color:#666;">1361.34</div>
<div class="t" style="left:450.38px;top:477.06px;width:56.99px;text-align:center;font-size:9px;color:#666;">0</div>
<div class="t" style="left:507.37px;top:477.06px;width:56.98px;text-align:center;font-size:9px;color:#666;">0.00%</div>
<div class="t" style="left:564.35px;top:477.06px;width:56.98px;text-align:center;font-size:9px;color:#666;">146690.12</div>
<div class="t" style="left:621.33px;top:477.06px;width:56.99px;text-align:center;font-size:9px;color:#666;">262.02</div>
<div class="t" style="left:678.32px;top:477.06px;width:56.98px;text-align:center;font-size:9px;color:#666;">33.39%</div>
<div class="t" style="left:735.3px;top:477.06px;width:56.98px;text-align:center;font-size:9px;color:#666;">177223.38</div>
<div class="t" style="left:792.28px;top:477.06px;width:56.99px;text-align:center;font-size:9px;color:#666;">308.41</div>
<div class="t" style="left:849.27px;top:477.06px;width:56.98px;text-align:center;font-size:9px;color:#666;">39.30%</div>
<div class="t" style="left:906.25px;top:477.06px;width:56.98px;text-align:center;font-size:9px;color:#666;">20249.33</div>
<div class="t" style="left:963.23px;top:477.06px;width:56.99px;text-align:center;font-size:9px;color:#666;">214.38</div>
<div class="t" style="left:1020.22px;top:477.06px;width:56.98px;text-align:center;font-size:9px;color:#666;">27.32%</div>
<!--/TABLE-->
</div>
</div>
</body></html>
